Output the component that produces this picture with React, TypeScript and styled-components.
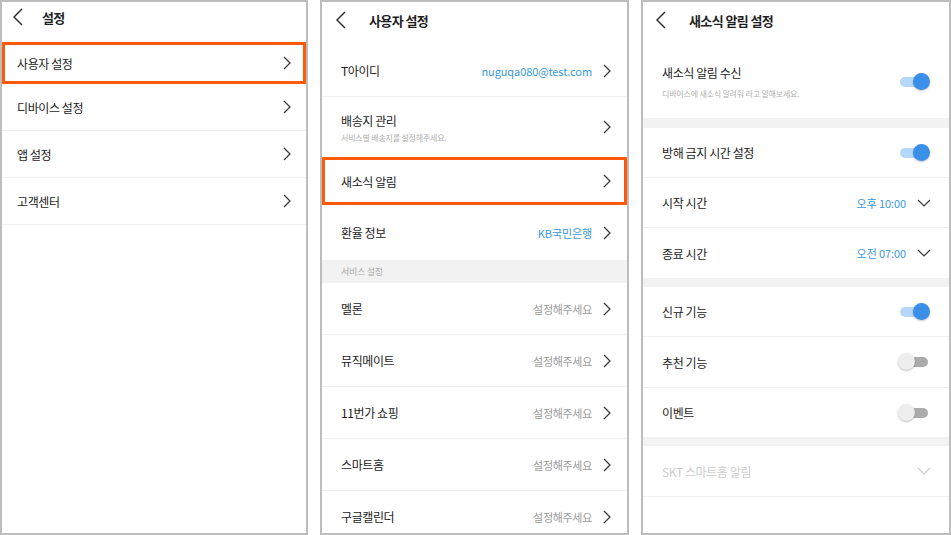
import React from 'react'
import styled, { createGlobalStyle, css } from 'styled-components'

const GlobalStyle = createGlobalStyle`
  html, body {
    margin: 0;
    padding: 0;
    background: #ffffff;
  }
  body {
    font-family: 'Noto Sans CJK KR', 'Noto Sans', sans-serif;
    color: #222222;
  }
`

const Stage = styled.main`
  display: flex;
  gap: 12px;
  width: 951px;
  height: 535px;
`

const Phone = styled.section<{ $w: number }>`
  width: ${(p) => p.$w}px;
  height: 535px;
  box-sizing: border-box;
  border: 2px solid #bdbdbd;
  background: #ffffff;
  display: flex;
  flex-direction: column;
  overflow: hidden;
`

/* top bar with back arrow; title sits a little above the middle */
const Header = styled.header<{ $h: number; $gap: number; $pl: number; $pb: number }>`
  flex: none;
  height: ${(p) => p.$h}px;
  box-sizing: border-box;
  display: flex;
  align-items: center;
  gap: ${(p) => p.$gap}px;
  padding: 0 0 ${(p) => p.$pb}px ${(p) => p.$pl}px;
`

const Title = styled.h1`
  margin: 0;
  font-size: 13px;
  font-weight: 700;
  letter-spacing: -0.6px;
  color: #1e1e1e;
`

const Row = styled.div<{ $h: number; $pl?: number; $pr?: number; $selected?: boolean; $flat?: boolean }>`
  flex: none;
  height: ${(p) => p.$h}px;
  box-sizing: border-box;
  display: flex;
  align-items: center;
  gap: 11px;
  padding: 0 ${(p) => p.$pr ?? 16}px 0 ${(p) => p.$pl ?? 19}px;
  border-bottom: ${(p) => (p.$flat ? 'none' : '1px solid #f0f0f0')};
  ${(p) =>
    p.$selected &&
    css`
      border: 3px solid #ff5a0a;
      padding-left: ${(p.$pl ?? 19) - 3}px;
      padding-right: ${(p.$pr ?? 16) - 3}px;
    `}
`

const Texts = styled.div<{ $gap?: number }>`
  flex: 1;
  display: flex;
  flex-direction: column;
  gap: ${(p) => p.$gap ?? 3}px;
  min-width: 0;
`

const Label = styled.span<{ $muted?: boolean }>`
  font-size: 12px;
  letter-spacing: -0.4px;
  color: ${(p) => (p.$muted ? '#cccccc' : '#1c1c1c')};
`

const Sub = styled.span`
  font-size: 8px;
  letter-spacing: -0.2px;
  color: #b0b0b0;
`

const Value = styled.span<{ $tone: 'blue' | 'gray' }>`
  font-size: 11px;
  letter-spacing: ${(p) => (p.$tone === 'blue' ? '-0.1px' : '-0.3px')};
  color: ${(p) => (p.$tone === 'blue' ? '#3a98da' : '#9a9a9a')};
`

const SectionBar = styled.div`
  flex: none;
  height: 23px;
  display: flex;
  align-items: center;
  padding-left: 19px;
  background: #f2f2f2;
  font-size: 9px;
  letter-spacing: -0.3px;
  color: #ababab;
`

const Band = styled.div<{ $h: number }>`
  flex: none;
  height: ${(p) => p.$h}px;
  background: #f2f2f2;
`

const Toggle = styled.span<{ $on: boolean }>`
  position: relative;
  flex: none;
  width: 32px;
  height: 18px;
  &::before {
    content: '';
    position: absolute;
    left: 2px;
    right: 2px;
    top: 4px;
    height: 10px;
    border-radius: 5px;
    background: ${(p) => (p.$on ? '#b6d8f8' : '#ababab')};
  }
  &::after {
    content: '';
    position: absolute;
    top: 0;
    ${(p) => (p.$on ? 'right: 0;' : 'left: 0;')}
    width: 17px;
    height: 17px;
    border-radius: 50%;
    background: ${(p) => (p.$on ? '#3a8fe9' : '#eeeeee')};
    box-shadow: 0 1px 2px rgba(0, 0, 0, 0.25);
  }
`

const Back = () => (
  <svg width="12" height="18" viewBox="0 0 12 18" fill="none">
    <polyline points="10,1 2,9 10,17" stroke="#333" strokeWidth="1.5" />
  </svg>
)

const ChevronRight = () => (
  <svg width="8" height="14" viewBox="0 0 8 14" fill="none" style={{ flex: 'none' }}>
    <polyline points="1,1 7,7 1,13" stroke="#3c3c3c" strokeWidth="1.3" />
  </svg>
)

const ChevronDown = ({ light }: { light?: boolean }) => (
  <svg width="14" height="8" viewBox="0 0 14 8" fill="none" style={{ flex: 'none' }}>
    <polyline points="1,1 7,7 13,1" stroke={light ? '#cfcfcf' : '#3c3c3c'} strokeWidth="1.2" />
  </svg>
)

const settingsMenu = ['디바이스 설정', '앱 설정', '고객센터']

const services = ['멜론', '뮤직메이트', '11번가 쇼핑', '스마트홈', '구글캘린더']

export default function App() {
  return (
    <>
      <GlobalStyle />
      <Stage>
        <Phone $w={308}>
          <Header $h={40} $gap={18} $pl={10} $pb={10}>
            <Back />
            <Title>설정</Title>
          </Header>
          <Row $h={42} $pl={15} $pr={15} $selected>
            <Texts>
              <Label>사용자 설정</Label>
            </Texts>
            <ChevronRight />
          </Row>
          {settingsMenu.map((name) => (
            <Row key={name} $h={47} $pl={15} $pr={15}>
              <Texts>
                <Label>{name}</Label>
              </Texts>
              <ChevronRight />
            </Row>
          ))}
        </Phone>

        <Phone $w={309}>
          <Header $h={43} $gap={22} $pl={13} $pb={7}>
            <Back />
            <Title>사용자 설정</Title>
          </Header>
          <Row $h={52}>
            <Texts>
              <Label>T아이디</Label>
            </Texts>
            <Value $tone="blue">nuguqa080@test.com</Value>
            <ChevronRight />
          </Row>
          <Row $h={60} $flat>
            <Texts>
              <Label>배송지 관리</Label>
              <Sub>서비스별 배송지를 설정해주세요.</Sub>
            </Texts>
            <ChevronRight />
          </Row>
          <Row $h={48} $selected>
            <Texts>
              <Label>새소식 알림</Label>
            </Texts>
            <ChevronRight />
          </Row>
          <Row $h={55} $flat>
            <Texts>
              <Label>환율 정보</Label>
            </Texts>
            <Value $tone="blue">KB국민은행</Value>
            <ChevronRight />
          </Row>
          <SectionBar>서비스 설정</SectionBar>
          {services.map((name) => (
            <Row key={name} $h={52}>
              <Texts>
                <Label>{name}</Label>
              </Texts>
              <Value $tone="gray">설정해주세요</Value>
              <ChevronRight />
            </Row>
          ))}
        </Phone>

        <Phone $w={310}>
          <Header $h={43} $gap={22} $pl={12} $pb={7}>
            <Back />
            <Title>새소식 알림 설정</Title>
          </Header>
          <Row $h={73} $pr={19} $flat>
            <Texts $gap={7}>
              <Label>새소식 알림 수신</Label>
              <Sub>디바이스에 새소식 알려줘 라고 말해보세요.</Sub>
            </Texts>
            <Toggle $on />
          </Row>
          <Band $h={10} />
          <Row $h={50} $pr={19}>
            <Texts>
              <Label>방해 금지 시간 설정</Label>
            </Texts>
            <Toggle $on />
          </Row>
          <Row $h={50} $pr={18}>
            <Texts>
              <Label>시작 시간</Label>
            </Texts>
            <Value $tone="blue">오후 10:00</Value>
            <ChevronDown />
          </Row>
          <Row $h={50} $pr={18} $flat>
            <Texts>
              <Label>종료 시간</Label>
            </Texts>
            <Value $tone="blue">오전 07:00</Value>
            <ChevronDown />
          </Row>
          <Band $h={9} />
          <Row $h={50} $pr={19}>
            <Texts>
              <Label>신규 기능</Label>
            </Texts>
            <Toggle $on />
          </Row>
          <Row $h={51} $pr={19}>
            <Texts>
              <Label>추천 기능</Label>
            </Texts>
            <Toggle $on={false} />
          </Row>
          <Row $h={49} $pr={19} $flat>
            <Texts>
              <Label>이벤트</Label>
            </Texts>
            <Toggle $on={false} />
          </Row>
          <Band $h={9} />
          <Row $h={51} $pr={18}>
            <Texts>
              <Label $muted>SKT 스마트홈 알림</Label>
            </Texts>
            <ChevronDown light />
          </Row>
        </Phone>
      </Stage>
    </>
  )
}
